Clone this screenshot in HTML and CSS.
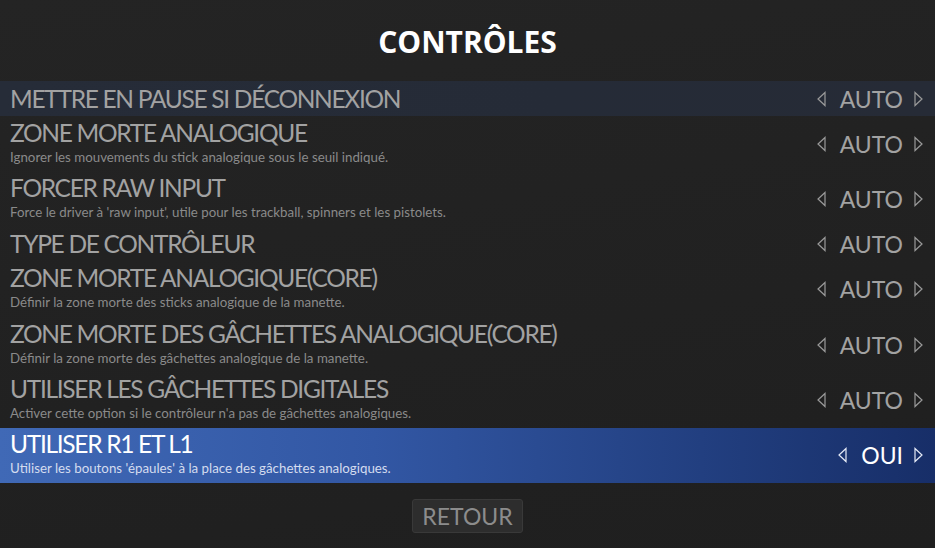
FILE: index.html
```html
<!DOCTYPE html>
<html lang="fr">
<head>
<meta charset="utf-8">
<title>Contrôles</title>
<link rel="stylesheet" href="styles.css">
</head>
<body>
<div class="screen">
  <header class="header"><h1 class="title">CONTRÔLES</h1></header>
  <main class="list">
    <div class="row single hover">
      <div class="text"><div class="label">METTRE EN PAUSE SI DÉCONNEXION</div></div>
      <div class="value"><svg class="arrow" viewBox="0 0 9 15"><polygon points="8,1 1,7.5 8,14"/></svg><span class="val">AUTO</span><svg class="arrow" viewBox="0 0 9 15"><polygon points="1,1 8,7.5 1,14"/></svg></div>
    </div>
    <div class="row">
      <div class="text"><div class="label">ZONE MORTE ANALOGIQUE</div><div class="desc">Ignorer les mouvements du stick analogique sous le seuil indiqué.</div></div>
      <div class="value"><svg class="arrow" viewBox="0 0 9 15"><polygon points="8,1 1,7.5 8,14"/></svg><span class="val">AUTO</span><svg class="arrow" viewBox="0 0 9 15"><polygon points="1,1 8,7.5 1,14"/></svg></div>
    </div>
    <div class="row">
      <div class="text"><div class="label">FORCER RAW INPUT</div><div class="desc">Force le driver à 'raw input', utile pour les trackball, spinners et les pistolets.</div></div>
      <div class="value"><svg class="arrow" viewBox="0 0 9 15"><polygon points="8,1 1,7.5 8,14"/></svg><span class="val">AUTO</span><svg class="arrow" viewBox="0 0 9 15"><polygon points="1,1 8,7.5 1,14"/></svg></div>
    </div>
    <div class="row single">
      <div class="text"><div class="label">TYPE DE CONTRÔLEUR</div></div>
      <div class="value"><svg class="arrow" viewBox="0 0 9 15"><polygon points="8,1 1,7.5 8,14"/></svg><span class="val">AUTO</span><svg class="arrow" viewBox="0 0 9 15"><polygon points="1,1 8,7.5 1,14"/></svg></div>
    </div>
    <div class="row">
      <div class="text"><div class="label">ZONE MORTE ANALOGIQUE(CORE)</div><div class="desc">Définir la zone morte des sticks analogique de la manette.</div></div>
      <div class="value"><svg class="arrow" viewBox="0 0 9 15"><polygon points="8,1 1,7.5 8,14"/></svg><span class="val">AUTO</span><svg class="arrow" viewBox="0 0 9 15"><polygon points="1,1 8,7.5 1,14"/></svg></div>
    </div>
    <div class="row">
      <div class="text"><div class="label">ZONE MORTE DES GÂCHETTES ANALOGIQUE(CORE)</div><div class="desc">Définir la zone morte des gâchettes analogique de la manette.</div></div>
      <div class="value"><svg class="arrow" viewBox="0 0 9 15"><polygon points="8,1 1,7.5 8,14"/></svg><span class="val">AUTO</span><svg class="arrow" viewBox="0 0 9 15"><polygon points="1,1 8,7.5 1,14"/></svg></div>
    </div>
    <div class="row">
      <div class="text"><div class="label">UTILISER LES GÂCHETTES DIGITALES</div><div class="desc">Activer cette option si le contrôleur n'a pas de gâchettes analogiques.</div></div>
      <div class="value"><svg class="arrow" viewBox="0 0 9 15"><polygon points="8,1 1,7.5 8,14"/></svg><span class="val">AUTO</span><svg class="arrow" viewBox="0 0 9 15"><polygon points="1,1 8,7.5 1,14"/></svg></div>
    </div>
    <div class="row selected">
      <div class="text"><div class="label">UTILISER R1 ET L1</div><div class="desc">Utiliser les boutons 'épaules' à la place des gâchettes analogiques.</div></div>
      <div class="value"><svg class="arrow" viewBox="0 0 9 15"><polygon points="8,1 1,7.5 8,14"/></svg><span class="val">OUI</span><svg class="arrow" viewBox="0 0 9 15"><polygon points="1,1 8,7.5 1,14"/></svg></div>
    </div>
  </main>
  <footer class="footer"><button class="btn">RETOUR</button></footer>
</div>
</body>
</html>
```
FILE: styles.css
```css
html, body {
  margin: 0;
  padding: 0;
}
body {
  width: 935px;
  height: 548px;
  overflow: hidden;
  background: #202020;
  font-family: Lato, "Open Sans", sans-serif;
}
.screen {
  width: 935px;
  height: 548px;
  background: linear-gradient(170deg, #242424 0%, #222222 40%, #1f1f1f 100%);
  display: flex;
  flex-direction: column;
}
.header {
  height: 81px;
  display: flex;
  align-items: center;
  justify-content: center;
}
.title {
  margin: 0;
  padding-top: 2px;
  font-family: "Open Sans", sans-serif;
  font-weight: 700;
  font-size: 30px;
  color: #ffffff;
}
.list {
  display: flex;
  flex-direction: column;
}
.row {
  height: 55.33px;
  display: flex;
  align-items: center;
  padding: 0 12px 0 10px;
  box-sizing: border-box;
}
.row.single {
  height: 35px;
}
.row.hover {
  background: linear-gradient(90deg, #262c38 0%, #252b37 60%, #262b36 100%);
}
.row.selected {
  background: linear-gradient(90deg, #4069b6 0%, #3257a4 40%, #223f80 75%, #172e68 100%);
}
.text {
  flex: 1;
  min-width: 0;
}
.label {
  font-size: 24.5px;
  line-height: 26px;
  letter-spacing: -1.3px;
  color: #a2a2a2;
  white-space: nowrap;
}
.desc {
  margin-top: 3px;
  font-size: 13.3px;
  line-height: 16px;
  color: #8a8a8a;
  white-space: nowrap;
}
.row:not(.single) .text {
  padding-bottom: 3px;
}
.selected .label {
  color: #ffffff;
}
.selected .desc {
  color: #d4dcef;
}
.value {
  display: flex;
  align-items: center;
}
.val {
  font-size: 23px;
  line-height: 28px;
  color: #a2a2a2;
  margin: 0 11px 0 14px;
}
.selected .val {
  color: #ffffff;
}
.arrow {
  width: 9px;
  height: 16px;
  display: block;
}
.arrow polygon {
  fill: none;
  stroke: #9a9a9a;
  stroke-width: 1.2;
}
.selected .arrow polygon {
  stroke: #e6ebf7;
}
.footer {
  flex: 1;
  display: flex;
  justify-content: center;
  padding-top: 16px;
}
.btn {
  align-self: flex-start;
  width: 111px;
  height: 34px;
  background: #2d2d2d;
  border: 1px solid #393939;
  border-radius: 3px;
  color: #8c8c8c;
  font-family: Lato, sans-serif;
  font-size: 23px;
  line-height: 32px;
  padding: 0;
}
```
